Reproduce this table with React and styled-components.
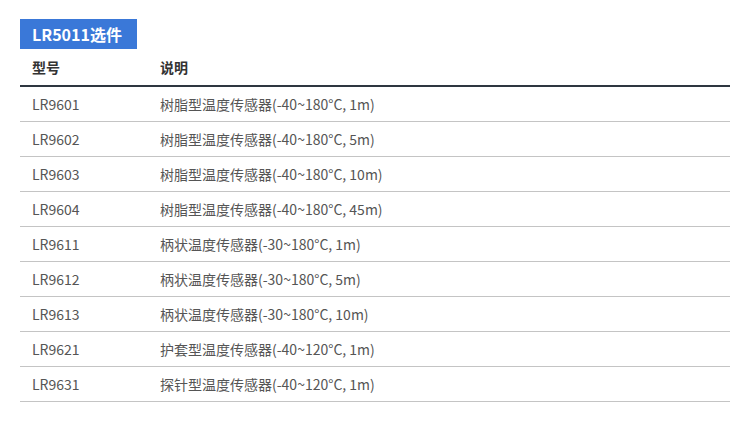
import styled, { createGlobalStyle } from 'styled-components';

const GlobalStyle = createGlobalStyle`
  body {
    margin: 0;
    background: #fff;
    font-family: 'Noto Sans CJK SC', 'Noto Sans', sans-serif;
  }
`;

const Wrapper = styled.div`
  padding: 19px 20px 0 20px;
`;

const Title = styled.div`
  width: 117px;
  box-sizing: border-box;
  height: 30px;
  line-height: 30px;
  padding: 0 12px;
  background: #3a78d8;
  color: #fff;
  font-size: 16px;
  font-weight: 700;
  white-space: nowrap;
`;

const Table = styled.table`
  width: 710px;
  border-collapse: collapse;
  table-layout: fixed;
  font-size: 14px;
`;

const HeadCell = styled.th`
  text-align: left;
  font-weight: 700;
  color: #333;
  height: 36px;
  padding: 0 0 0 12px;
  vertical-align: middle;
  border-bottom: 2px solid #2e3640;
`;

const Cell = styled.td`
  color: #555;
  height: 34px;
  padding: 0 0 0 12px;
  border-bottom: 1px solid #c4c4c4;
`;

const rows = [
  ['LR9601', '树脂型温度传感器(-40~180°C, 1m)'],
  ['LR9602', '树脂型温度传感器(-40~180°C, 5m)'],
  ['LR9603', '树脂型温度传感器(-40~180°C, 10m)'],
  ['LR9604', '树脂型温度传感器(-40~180°C, 45m)'],
  ['LR9611', '柄状温度传感器(-30~180°C, 1m)'],
  ['LR9612', '柄状温度传感器(-30~180°C, 5m)'],
  ['LR9613', '柄状温度传感器(-30~180°C, 10m)'],
  ['LR9621', '护套型温度传感器(-40~120°C, 1m)'],
  ['LR9631', '探针型温度传感器(-40~120°C, 1m)'],
];

export default function App() {
  return (
    <Wrapper>
      <GlobalStyle />
      <Title>LR5011选件</Title>
      <Table>
        <colgroup>
          <col style={{ width: 128 }} />
          <col />
        </colgroup>
        <thead>
          <tr>
            <HeadCell>型号</HeadCell>
            <HeadCell>说明</HeadCell>
          </tr>
        </thead>
        <tbody>
          {rows.map(([model, desc]) => (
            <tr key={model}>
              <Cell>{model}</Cell>
              <Cell>{desc}</Cell>
            </tr>
          ))}
        </tbody>
      </Table>
    </Wrapper>
  );
}
